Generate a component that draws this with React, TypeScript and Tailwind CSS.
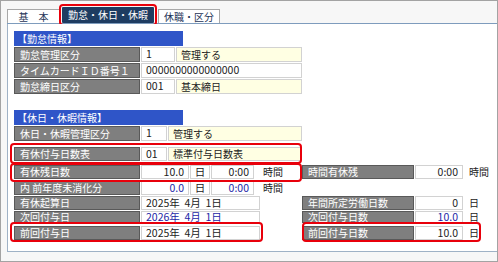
const LBL = "flex items-center h-full bg-[#7f7f7f] border border-[#595959] text-white pl-[5px] whitespace-nowrap";
const VAL = "flex items-center h-full bg-white border border-[#d2d2d2] px-[4px] whitespace-pre text-[10.5px]";
const YEL = "flex items-center h-full bg-[#ffffe3] border border-[#d2d2d2] px-[4px] whitespace-nowrap";
const BLUE = "text-[#1d1fa6]";

function Num({ v, w, blue }: { v: string; w: string; blue?: boolean }) {
  return <div className={`${VAL} justify-end ${w} ${blue ? BLUE : ""}`}>{v}</div>;
}

function DayTime({ d, t, blue }: { d: string; t: string; blue?: boolean }) {
  return (
    <>
      <Num v={d} w="w-[48px]" blue={blue} />
      <div className={`${VAL} justify-center w-[20px] px-0`}>日</div>
      <Num v={t} w="w-[43px]" blue={blue} />
      <div className="w-[46px] pl-[8px] flex items-center">時間</div>
    </>
  );
}

function RightItem({ label, v, unit, blue }: { label: string; v: string; unit: string; blue?: boolean }) {
  return (
    <>
      <div className={`${LBL} w-[112px]`}>{label}</div>
      <Num v={v} w="w-[48px]" blue={blue} />
      <div className="pl-[5px] flex items-center">{unit}</div>
    </>
  );
}

export default function App() {
  return (
    <div className="w-[498px] h-[262px] flex flex-col border border-[#a3a3a3] bg-[#f7f7f7] text-[10px] leading-none text-[#222] [font-family:'Noto_Sans_CJK_JP',sans-serif]">
      {/* タブ */}
      <div className="ml-[6px] h-[23px] shrink-0 flex items-end border-b border-[#7e9cbd]">
        <div className="w-[53px] h-[14px] flex items-center justify-center bg-white border border-b-0 border-[#a8a8a8] text-[#1f3558] whitespace-pre">基　本</div>
        <div className="ml-[2px] w-[92px] h-[16px] flex items-center justify-center bg-[#1e3c61] text-white rounded-[1px] outline-2 outline-offset-1 outline-[#e8000b]">勤怠・休日・休暇</div>
        <div className="ml-[4px] w-[62px] h-[14px] flex items-center justify-center bg-white border border-b-0 border-[#a8a8a8] text-[#1f3558]">休職・区分</div>
      </div>

      <div className="relative ml-[6px] mb-[9px] flex-1 flex flex-col bg-white border-l border-b border-[#9fb2c6] pl-[6px] pt-[7px]">
        {/* 勤怠情報 */}
        <div className="w-[169px] h-[15px] flex items-center bg-[#2f55c8] text-white pl-[3px]">【勤怠情報】</div>
        <div className="mt-px flex flex-col gap-px">
          <div className="flex h-[15px] gap-px">
            <div className={`${LBL} w-[126px]`}>勤怠管理区分</div>
            <div className={`${VAL} w-[34px]`}>1</div>
            <div className={`${YEL} w-[126px]`}>管理する</div>
          </div>
          <div className="flex h-[15px] gap-px">
            <div className={`${LBL} w-[126px]`}>タイムカードＩＤ番号１</div>
            <div className={`${VAL} w-[161px]`}>0000000000000000</div>
          </div>
          <div className="flex h-[15px] gap-px">
            <div className={`${LBL} w-[126px]`}>勤怠締日区分</div>
            <div className={`${VAL} w-[34px]`}>001</div>
            <div className={`${YEL} w-[126px]`}>基本締日</div>
          </div>
        </div>

        {/* 休日・休暇情報 */}
        <div className="mt-[16px] w-[169px] h-[15px] flex items-center bg-[#2f55c8] text-white pl-[3px]">【休日・休暇情報】</div>
        <div className="mt-px flex h-[15px] gap-px">
          <div className={`${LBL} w-[126px]`}>休日・休暇管理区分</div>
          <div className={`${VAL} w-[26px]`}>1</div>
          <div className={`${YEL} w-[134px]`}>管理する</div>
        </div>
        <div className="mt-[6px] flex h-[14px] gap-px">
          <div className={`${LBL} w-[126px]`}>有休付与日数表</div>
          <div className={`${VAL} w-[26px]`}>01</div>
          <div className={`${YEL} w-[134px]`}>標準付与日数表</div>
        </div>
        <div className="mt-[4px] flex h-[14px] gap-px">
          <div className={`${LBL} w-[126px]`}>有休残日数</div>
          <DayTime d="10.0" t="0:00" />
          <RightItem label="時間有休残" v="0:00" unit="時間" />
        </div>
        <div className="mt-[2px] flex h-[14px] gap-px">
          <div className={`${LBL} w-[126px]`}>内 前年度未消化分</div>
          <DayTime d="0.0" t="0:00" blue />
        </div>
        <div className="mt-px flex h-[14px] gap-px">
          <div className={`${LBL} w-[126px]`}>有休起算日</div>
          <div className={`${VAL} w-[119px]`}>2025年  4月  1日</div>
          <div className="w-[40px]" />
          <RightItem label="年間所定労働日数" v="0" unit="日" />
        </div>
        <div className="mt-px flex h-[12px] gap-px">
          <div className={`${LBL} w-[126px]`}>次回付与日</div>
          <div className={`${VAL} w-[119px] ${BLUE}`}>2026年  4月  1日</div>
          <div className="w-[40px]" />
          <RightItem label="次回付与日数" v="10.0" unit="日" blue />
        </div>
        <div className="mt-[3px] flex h-[14px] gap-px">
          <div className={`${LBL} w-[126px]`}>前回付与日</div>
          <div className={`${VAL} w-[119px]`}>2025年  4月  1日</div>
          <div className="w-[40px]" />
          <RightItem label="前回付与日数" v="10.0" unit="日" />
        </div>

        {/* 強調枠 */}
        <div className="absolute left-[2px] top-[119px] w-[292px] h-[21px] border-2 border-[#e8000b] rounded-[4px]" />
        <div className="absolute left-[2px] top-[139px] w-[292px] h-[19px] border-2 border-[#e8000b] rounded-[4px]" />
        <div className="absolute left-[2px] top-[198px] w-[253px] h-[20px] border-2 border-[#e8000b] rounded-[4px]" />
        <div className="absolute left-[294px] top-[198px] w-[179px] h-[20px] border-2 border-[#e8000b] rounded-[4px]" />
      </div>
    </div>
  );
}
